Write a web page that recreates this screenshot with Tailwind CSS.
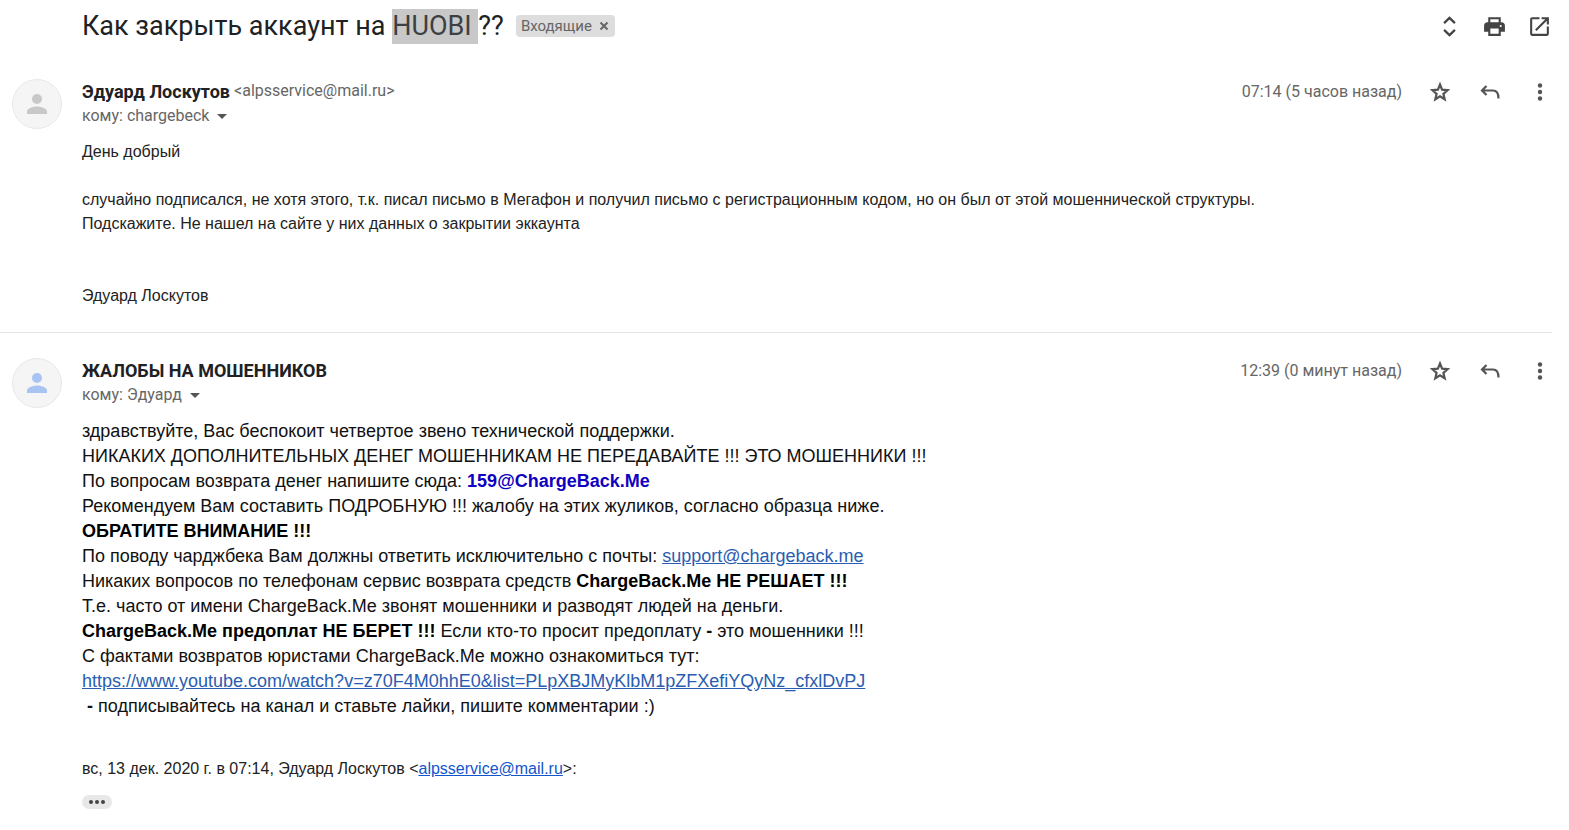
<!DOCTYPE html>
<html lang="ru">
<head>
  <meta charset="UTF-8">
  <meta name="viewport" content="width=device-width, initial-scale=1.0">
  <title>Как закрыть аккаунт на HUOBI ??</title>
  <script src="https://cdn.jsdelivr.net/npm/@tailwindcss/browser@4"></script>
</head>
<body class="bg-white pr-[17px] font-['Roboto',sans-serif] text-[#666]">

  <!-- Subject -->
  <header class="flex h-[52px] items-center pl-[82px]">
    <h1 class="whitespace-nowrap text-[27px] leading-[35px] text-[#202124]">Как закрыть аккаунт на <mark class="inline-block whitespace-pre bg-[#c8c8c8] text-[#3c4043]">HUOBI </mark>??</h1>
    <div class="ml-3 flex h-[22px] items-center gap-[6px] rounded bg-[#ddd] px-[5px] text-[15px] text-[#666]">
      <span>Входящие</span>
      <button type="button" aria-label="Убрать ярлык">
        <svg class="h-3 w-3" viewBox="0 0 12 12" fill="none" stroke="#666" stroke-width="2"><path d="M2.500 2.500l7 7M9.500 2.500l-7 7"/></svg>
      </button>
    </div>
    <div class="ml-auto flex gap-5 text-[#444]">
      <button type="button" aria-label="Развернуть все">
        <svg class="size-[25px]" viewBox="0 0 24 24" fill="none" stroke="currentColor" stroke-width="2.200"><path d="M6.800 8.800L12 3.700l5.200 5.100M6.800 15.200l5.200 5.100 5.200-5.100"/></svg>
      </button>
      <button type="button" aria-label="Печать">
        <svg class="size-[25px]" viewBox="0 0 24 24" fill="currentColor"><path fill-rule="evenodd" d="M18 8V3H6v5H5c-1.660 0-3 1.340-3 3v6h4v4h12v-4h4v-6c0-1.660-1.340-3-3-3h-1zM8 5h8v3H8V5zm8 14H8v-5h8v5zm2-6.500a1 1 0 1 1 0-2 1 1 0 0 1 0 2z"/></svg>
      </button>
      <button type="button" aria-label="В новом окне">
        <svg class="size-[25px]" viewBox="0 0 24 24" fill="currentColor"><path d="M19 19H5V5h7V3H5c-1.110 0-2 .9-2 2v14c0 1.100.890 2 2 2h14c1.100 0 2-.9 2-2v-7h-2v7zM14 3v2h3.590l-9.830 9.830 1.410 1.410L19 6.410V10h2V3h-7z"/></svg>
      </button>
    </div>
  </header>

  <main>
    <!-- Message 1 -->
    <article class="flex gap-5 border-b border-[#e4e4e4] pt-[27px] pb-6 pl-3">
      <div class="flex size-[50px] shrink-0 items-center justify-center rounded-full border border-[#e8e8e8] bg-[#f5f5f5]">
        <svg class="size-[30px]" viewBox="0 0 24 24" fill="#c8c8c8"><circle cx="12" cy="8" r="4"/><path d="M12 14c-2.670 0-8 1.340-8 4v2h16v-2c0-2.660-5.330-4-8-4z"/></svg>
      </div>
      <div class="min-w-0 flex-1">
        <div class="flex items-start">
          <div class="flex-1">
            <div class="flex gap-1">
              <h2 class="text-[18px] leading-[25px] font-bold text-[#202124]">Эдуард Лоскутов</h2>
              <span class="text-[16px] leading-6">&lt;alpsservice@mail.ru&gt;</span>
            </div>
            <button type="button" class="flex items-center gap-2 text-[16px] leading-6">кому: chargebeck
              <svg class="h-[5px] w-2.5" viewBox="0 0 10 5" fill="#555"><path d="M0 0h10L5 5z"/></svg>
            </button>
          </div>
          <div class="flex h-[25px] items-center">
            <time class="mr-[26px] text-[16px]">07:14 (5 часов назад)</time>
            <div class="flex gap-[26px] text-[#555]">
              <button type="button" aria-label="Пометить">
                <svg class="size-6" viewBox="0 0 24 24" fill="none" stroke="currentColor" stroke-width="2.200"><path d="M12 4.500l2.100 5.200 5.500.500-4.200 3.600 1.300 5.500L12 16.400l-4.700 2.900 1.300-5.500-4.200-3.600 5.500-.5z"/></svg>
              </button>
              <button type="button" aria-label="Ответить">
                <svg class="size-6" viewBox="0 0 24 24" fill="none" stroke="currentColor" stroke-width="2.200"><path d="M8.500 6L4 10.500 8.500 15M4 10.500h11q5.500 0 5.500 8"/></svg>
              </button>
              <button type="button" aria-label="Ещё">
                <svg class="size-6" viewBox="0 0 24 24" fill="currentColor"><circle cx="12" cy="5.500" r="2.200"/><circle cx="12" cy="12" r="2.200"/><circle cx="12" cy="18.500" r="2.200"/></svg>
              </button>
            </div>
          </div>
        </div>
        <div class="mt-3 font-['Liberation_Sans',sans-serif] text-[16px] leading-6 text-[#222]">
          <p>День добрый</p>
          <p class="mt-6">случайно подписался, не хотя этого, т.к. писал письмо в Мегафон и получил письмо с регистрационным кодом, но он был от этой мошеннической структуры.</p>
          <p>Подскажите. Не нашел на сайте у них данных о закрытии эккаунта</p>
          <p class="mt-12">Эдуард Лоскутов</p>
        </div>
      </div>
    </article>

    <!-- Message 2 -->
    <article class="flex gap-5 pt-[25px] pl-3">
      <div class="flex size-[50px] shrink-0 items-center justify-center rounded-full border border-[#e8e8e8] bg-[#f5f5f5]">
        <svg class="size-[30px]" viewBox="0 0 24 24" fill="#a9c4f2"><circle cx="12" cy="8" r="4"/><path d="M12 14c-2.670 0-8 1.340-8 4v2h16v-2c0-2.660-5.330-4-8-4z"/></svg>
      </div>
      <div class="min-w-0 flex-1">
        <div class="flex items-start">
          <div class="flex-1">
            <h2 class="text-[18px] leading-[25px] font-bold text-[#202124]">ЖАЛОБЫ НА МОШЕННИКОВ</h2>
            <button type="button" class="flex items-center gap-2 text-[16px] leading-6">кому: Эдуард
              <svg class="h-[5px] w-2.5" viewBox="0 0 10 5" fill="#555"><path d="M0 0h10L5 5z"/></svg>
            </button>
          </div>
          <div class="flex h-[25px] items-center">
            <time class="mr-[26px] text-[16px]">12:39 (0 минут назад)</time>
            <div class="flex gap-[26px] text-[#555]">
              <button type="button" aria-label="Пометить">
                <svg class="size-6" viewBox="0 0 24 24" fill="none" stroke="currentColor" stroke-width="2.200"><path d="M12 4.500l2.100 5.200 5.500.500-4.200 3.600 1.300 5.500L12 16.400l-4.700 2.900 1.300-5.500-4.200-3.600 5.500-.5z"/></svg>
              </button>
              <button type="button" aria-label="Ответить">
                <svg class="size-6" viewBox="0 0 24 24" fill="none" stroke="currentColor" stroke-width="2.200"><path d="M8.500 6L4 10.500 8.500 15M4 10.500h11q5.500 0 5.500 8"/></svg>
              </button>
              <button type="button" aria-label="Ещё">
                <svg class="size-6" viewBox="0 0 24 24" fill="currentColor"><circle cx="12" cy="5.500" r="2.200"/><circle cx="12" cy="12" r="2.200"/><circle cx="12" cy="18.500" r="2.200"/></svg>
              </button>
            </div>
          </div>
        </div>
        <div class="mt-3 font-['Liberation_Sans',sans-serif] text-[18px] leading-[25px] text-[#111]">
          <p>здравствуйте, Вас беспокоит четвертое звено технической поддержки.</p>
          <p>НИКАКИХ ДОПОЛНИТЕЛЬНЫХ ДЕНЕГ МОШЕННИКАМ НЕ ПЕРЕДАВАЙТЕ !!! ЭТО МОШЕННИКИ !!!</p>
          <p>По вопросам возврата денег напишите сюда: <b class="text-[#1000c0]">159@ChargeBack.Me</b></p>
          <p>Рекомендуем Вам составить ПОДРОБНУЮ !!! жалобу на этих жуликов, согласно образца ниже.</p>
          <p><b class="text-black">ОБРАТИТЕ ВНИМАНИЕ !!!</b></p>
          <p>По поводу чарджбека Вам должны ответить исключительно с почты: <a href="mailto:support@chargeback.me" class="text-[#2a5db0] underline">support@chargeback.me</a></p>
          <p>Никаких вопросов по телефонам сервис возврата средств <b class="text-black">ChargeBack.Me НЕ РЕШАЕТ !!!</b></p>
          <p>Т.е. часто от имени ChargeBack.Me звонят мошенники и разводят людей на деньги.</p>
          <p><b class="text-black">ChargeBack.Me предоплат НЕ БЕРЕТ !!!</b> Если кто-то просит предоплату <b>-</b> это мошенники !!!</p>
          <p>С фактами возвратов юристами ChargeBack.Me можно ознакомиться тут:</p>
          <p><a href="https://www.youtube.com/watch?v=z70F4M0hhE0&amp;list=PLpXBJMyKlbM1pZFXefiYQyNz_cfxlDvPJ" class="text-[#2a5db0] underline">https://www.youtube.com/watch?v=z70F4M0hhE0&amp;list=PLpXBJMyKlbM1pZFXefiYQyNz_cfxlDvPJ</a></p>
          <p>&nbsp;<b>-</b> подписывайтесь на канал и ставьте лайки, пишите комментарии :)</p>
        </div>
        <p class="mt-[38px] font-['Liberation_Sans',sans-serif] text-[16px] leading-6 text-[#222]">вс, 13 дек. 2020 г. в 07:14, Эдуард Лоскутов &lt;<a href="mailto:alpsservice@mail.ru" class="text-[#1155cc] underline">alpsservice@mail.ru</a>&gt;:</p>
        <button type="button" aria-label="Показать скрытую часть" class="mt-3.5 flex h-3.5 w-[30px] items-center justify-center gap-0.5 rounded-full bg-[#e8e8e8]">
          <span class="size-1 rounded-full bg-[#444]"></span>
          <span class="size-1 rounded-full bg-[#444]"></span>
          <span class="size-1 rounded-full bg-[#444]"></span>
        </button>
      </div>
    </article>
  </main>

</body>
</html>
